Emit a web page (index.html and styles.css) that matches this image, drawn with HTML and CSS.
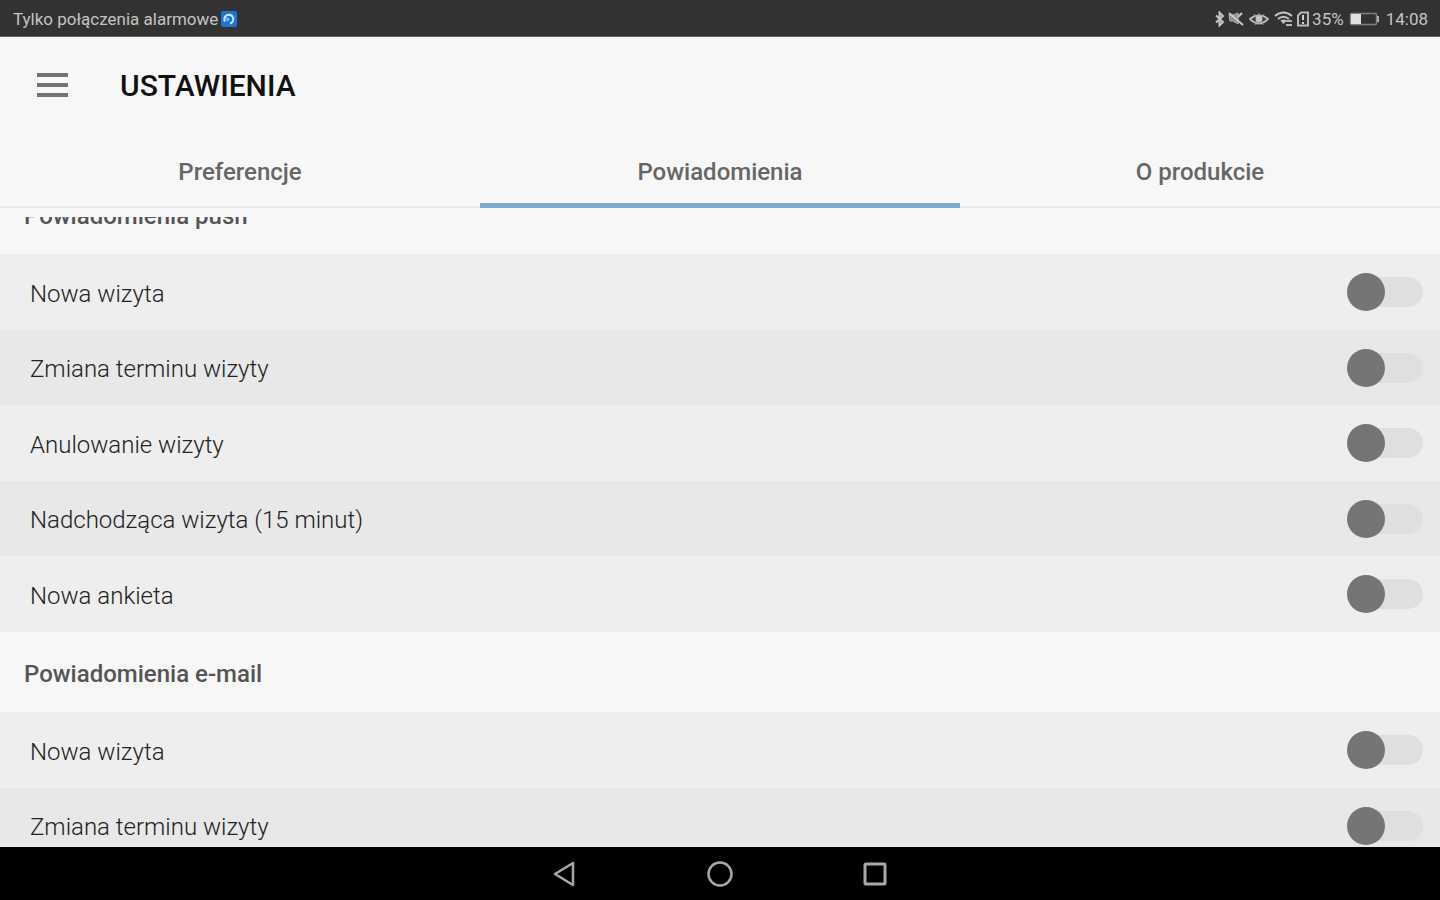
FILE: index.html
```html
<!DOCTYPE html>
<html lang="pl">
<head>
  <meta charset="UTF-8">
  <meta name="viewport" content="width=device-width, initial-scale=1.0">
  <title>Ustawienia</title>
  <link rel="stylesheet" href="styles.css">
</head>

<body>
  <div class="status-bar">
    <div class="status-left">
      <span>Tylko połączenia alarmowe</span>
      <svg width="16" height="16" viewBox="0 0 16 16">
        <rect width="16" height="16" rx="2" fill="#1c74d4"/>
        <path d="M4 10.500A4.500 4.500 0 1 1 9 12.500" fill="none" stroke="#cfe4fa" stroke-width="2"/>
        <path d="M5 6l4 2-3 3z" fill="#8fc0f2"/>
      </svg>
    </div>
    <div class="status-right">
      <!-- bluetooth -->
      <svg width="12" height="16" viewBox="0 0 12 16">
        <path d="M2 4.500l7 6.500-3.500 3.500V1.500L9 5l-7 6.500" fill="none" stroke="#c4c4c4" stroke-width="2"/>
      </svg>
      <!-- muted -->
      <svg width="16" height="16" viewBox="0 0 16 16">
        <path d="M1 4h4l5-2v11L5 10H2z" fill="#8c8c8c" stroke="#b4b4b4"/>
        <path d="M1 2l14 12M10 6l4-4" fill="none" stroke="#c8c8c8" stroke-width="2"/>
      </svg>
      <!-- eye comfort -->
      <svg class="icon-eye" width="20" height="16" viewBox="0 0 20 16">
        <path d="M1 8q9-7 18 0q-9 9-18 0z" fill="none" stroke="#b4b4b4" stroke-width="2"/>
        <circle cx="10" cy="8" r="3.500" fill="#c4c4c4"/>
        <path d="M10 2v3M5 3l1 3M15 3l-1 3M6 14l1-3M14 14l-1-3" stroke="#a4a4a4"/>
      </svg>
      <!-- wifi -->
      <svg width="20" height="16" viewBox="0 0 20 16">
        <path d="M1 5q8.500-7 17 0M4 8q5.500-4.500 11 0" fill="none" stroke="#c4c4c4" stroke-width="2"/>
        <path d="M6.500 9.500q3-2 6 0L9.500 13z" fill="#c4c4c4"/>
        <path d="M12 10h6M12 14h6" stroke="#b4b4b4" stroke-width="2"/>
      </svg>
      <!-- sim card -->
      <svg width="14" height="16" viewBox="0 0 14 16">
        <path d="M2 4.500L5 1.500h7v13H2z" fill="none" stroke="#b8b8b8" stroke-width="2"/>
        <path d="M7 4v5M7 11v2" stroke="#d0d0d0" stroke-width="2"/>
      </svg>
      <span>35%</span>
      <!-- battery -->
      <svg class="icon-battery" width="32" height="14" viewBox="0 0 32 14">
        <rect x="1.500" y="1.500" width="26" height="11" rx="1" fill="none" stroke="#808080" stroke-width="1.500"/>
        <rect x="2" y="2" width="10" height="10" fill="#e0e0e0"/>
        <path d="M29 4v6" stroke="#b0b0b0" stroke-width="2"/>
      </svg>
      <span>14:08</span>
    </div>
  </div>

  <header class="app-header">
    <button class="menu-btn" aria-label="Menu">
      <span></span>
      <span></span>
      <span></span>
    </button>
    <h1>USTAWIENIA</h1>
  </header>

  <nav class="tabs">
    <a href="#preferencje">Preferencje</a>
    <a href="#powiadomienia" class="active">Powiadomienia</a>
    <a href="#o-produkcie">O produkcie</a>
  </nav>

  <main class="content">
    <div class="settings">
      <h2>Powiadomienia push</h2>
      <ul>
        <li><label for="push-nowa">Nowa wizyta</label><input type="checkbox" class="switch" id="push-nowa"></li>
        <li><label for="push-zmiana">Zmiana terminu wizyty</label><input type="checkbox" class="switch" id="push-zmiana"></li>
        <li><label for="push-anulowanie">Anulowanie wizyty</label><input type="checkbox" class="switch" id="push-anulowanie"></li>
        <li><label for="push-nadchodzaca">Nadchodząca wizyta (15 minut)</label><input type="checkbox" class="switch" id="push-nadchodzaca"></li>
        <li><label for="push-ankieta">Nowa ankieta</label><input type="checkbox" class="switch" id="push-ankieta"></li>
      </ul>
      <h2>Powiadomienia e-mail</h2>
      <ul>
        <li><label for="mail-nowa">Nowa wizyta</label><input type="checkbox" class="switch" id="mail-nowa"></li>
        <li><label for="mail-zmiana">Zmiana terminu wizyty</label><input type="checkbox" class="switch" id="mail-zmiana"></li>
      </ul>
    </div>
  </main>

  <footer class="nav-bar">
    <button aria-label="Wstecz">
      <svg width="28" height="28" viewBox="0 0 28 28">
        <path d="M5 14L23 3v22z" fill="none" stroke="#a8a8a8" stroke-width="2.500" stroke-linejoin="round"/>
      </svg>
    </button>
    <button aria-label="Ekran główny">
      <svg width="28" height="28" viewBox="0 0 28 28">
        <circle cx="14" cy="14" r="11.500" fill="none" stroke="#a8a8a8" stroke-width="2.500"/>
      </svg>
    </button>
    <button aria-label="Ostatnie aplikacje">
      <svg width="28" height="28" viewBox="0 0 28 28">
        <rect x="3" y="4" width="20" height="20" rx="1" fill="none" stroke="#a8a8a8" stroke-width="3"/>
      </svg>
    </button>
  </footer>
</body>
</html>
```
FILE: styles.css
```css
/* General */
* {
  box-sizing: border-box;
}

body {
  font-family: Roboto, 'Liberation Sans', sans-serif;
  margin: 0;
  height: 100vh;
  display: flex;
  flex-direction: column;
  background-color: #f7f7f7;
  color: #222;
  overflow: hidden;
}

button {
  background: none;
  border: none;
  padding: 0;
  cursor: pointer;
}

svg {
  display: block;
}

/* Status bar */
.status-bar {
  display: flex;
  justify-content: space-between;
  align-items: center;
  flex: none;
  height: 37px;
  padding: 1px 12px 0 13px;
  background-color: #323232;
  border-bottom: 1px solid #666;
  color: #c4c4c4;
  font-size: 17px;
}

.status-left,
.status-right {
  display: flex;
  align-items: center;
  gap: 3px;
}

.status-right {
  gap: 2px;
}

.icon-eye,
.icon-battery {
  margin: 0 3px;
}

/* Header */
.app-header {
  display: flex;
  align-items: center;
  gap: 52px;
  flex: none;
  height: 98px;
  padding: 0 37px 3px;
}

.app-header h1 {
  margin: 0;
  padding-top: 2px;
  font-size: 30px;
  font-weight: 500;
  color: #111;
}

.menu-btn {
  display: flex;
  flex-direction: column;
  gap: 6px;
  width: 31px;
}

.menu-btn span {
  height: 4px;
  background-color: #737373;
}

/* Tabs */
.tabs {
  display: flex;
  flex: none;
  height: 73px;
}

.tabs a {
  flex: 1;
  display: flex;
  justify-content: center;
  align-items: center;
  box-shadow: inset 0 -2px #ebebeb;
  font-size: 24px;
  font-weight: 500;
  color: #666;
  text-decoration: none;
}

.tabs .active {
  box-shadow: inset 0 -5px #80a9d0;
}

/* Settings list */
.content {
  flex: 1;
  min-height: 0;
  margin-top: 9px;
  overflow-y: auto;
  scrollbar-width: none;
}

.settings {
  margin-top: -43px; /* list is scrolled a little */
}

.settings h2 {
  display: flex;
  align-items: center;
  height: 80px;
  margin: 0;
  padding: 3px 24px 0;
  font-size: 24px;
  font-weight: 500;
  color: #555;
}

.settings ul {
  list-style: none;
  margin: 0;
  padding: 0;
}

.settings li {
  display: flex;
  justify-content: space-between;
  align-items: center;
  height: 76px;
  padding: 0 17px 0 30px;
  background-color: #eee;
  font-size: 24px;
  font-weight: 300;
}

.settings li:nth-child(even) {
  height: 75px;
  background-color: #e8e8e8;
}

.settings label {
  padding-top: 3px;
}

/* Switch */
.switch {
  appearance: none;
  display: flex;
  align-items: center;
  width: 72px;
  height: 30px;
  margin: 0;
  border-radius: 15px;
  background-color: #dedfe1;
  cursor: pointer;
}

.switch::before {
  content: "";
  width: 38px;
  height: 38px;
  margin-left: -4px;
  flex: none;
  border-radius: 50%;
  background-color: #757575;
}

.switch:checked {
  justify-content: flex-end;
}

.switch:checked::before {
  background-color: #80a9d0;
}

/* Navigation bar */
.nav-bar {
  display: flex;
  justify-content: center;
  align-items: center;
  gap: 128px;
  flex: none;
  height: 53px;
  background-color: #000;
}
```
